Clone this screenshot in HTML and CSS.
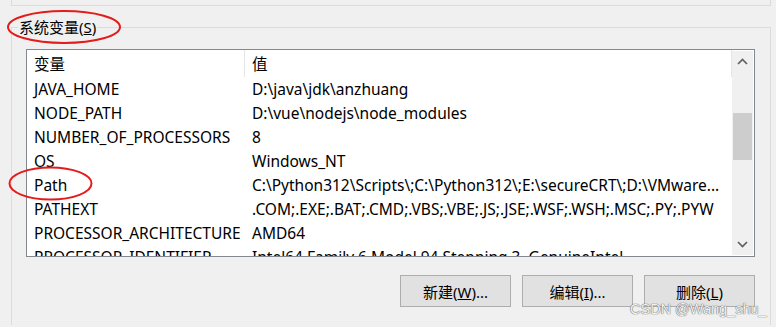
FILE: index.html
```html
<!DOCTYPE html>
<html>
<head>
<meta charset="utf-8">
<title>系统变量</title>
<link rel="stylesheet" href="styles.css">
</head>
<body>

<div class="prev-group"></div>

<fieldset class="group">
  <legend>系统变量(<u>S</u>)</legend>

  <div class="listview">
    <div class="list-body">
      <div class="row head">
        <div class="cell">变量</div>
        <div class="cell">值</div>
      </div>
      <div class="row"><div class="cell">JAVA_HOME</div><div class="cell">D:\java\jdk\anzhuang</div></div>
      <div class="row"><div class="cell">NODE_PATH</div><div class="cell">D:\vue\nodejs\node_modules</div></div>
      <div class="row"><div class="cell">NUMBER_OF_PROCESSORS</div><div class="cell">8</div></div>
      <div class="row"><div class="cell">OS</div><div class="cell">Windows_NT</div></div>
      <div class="row"><div class="cell">Path</div><div class="cell">C:\Python312\Scripts\;C:\Python312\;E:\secureCRT\;D:\VMware...</div></div>
      <div class="row"><div class="cell">PATHEXT</div><div class="cell">.COM;.EXE;.BAT;.CMD;.VBS;.VBE;.JS;.JSE;.WSF;.WSH;.MSC;.PY;.PYW</div></div>
      <div class="row"><div class="cell">PROCESSOR_ARCHITECTURE</div><div class="cell">AMD64</div></div>
      <div class="row"><div class="cell">PROCESSOR_IDENTIFIER</div><div class="cell">Intel64 Family 6 Model 94 Stepping 3, GenuineIntel</div></div>
    </div>

    <div class="scrollbar">
      <div class="sb-btn">
        <svg width="11" height="7" viewBox="0 0 11 7"><polyline points="1,6 5.5,1.5 10,6" /></svg>
      </div>
      <div class="sb-track"><div class="sb-thumb"></div></div>
      <div class="sb-btn">
        <svg width="11" height="7" viewBox="0 0 11 7"><polyline points="1,1 5.5,5.5 10,1" /></svg>
      </div>
    </div>
  </div>

  <div class="buttons">
    <button class="btn">新建(<u>W</u>)...</button>
    <button class="btn">编辑(<u>I</u>)...</button>
    <button class="btn">删除(<u>L</u>)</button>
  </div>
</fieldset>

<!-- red marks drawn over the screenshot -->
<svg class="marks" width="776" height="327">
  <ellipse cx="64" cy="27" rx="56" ry="16" />
  <ellipse cx="50.5" cy="183.5" rx="41" ry="16" />
</svg>

<div class="watermark">CSDN @Wang_shu_</div>

</body>
</html>
```

FILE: styles.css
```css
html, body {
    height: 327px;
    overflow: hidden;
}

body {
    margin: 0;
    position: relative;
    background: #f0f0f0;
    color: #000;
    font-family: "Noto Sans", "Noto Sans CJK SC", sans-serif;
    font-size: 15.5px;
}

.prev-group {
    margin: 0 5px 0 11px;
    height: 5px;
    border: 1px solid #dcdcdc;
    border-top: none;
}

.group {
    margin: 10px 5px 0 11px;
    padding: 0 15px 18px 14px;
    border: 1px solid #dcdcdc;
    border-bottom: none;
}

.group legend {
    margin-left: -8px;
    padding: 0 1px;
    font-size: 15px;
    line-height: 22px;
}

.listview {
    margin-top: 11px;
    height: 206px;
    display: flex;
    border: 1px solid #828790;
    background: #fff;
}

.list-body {
    width: 705px;
    overflow: hidden;
}

.row {
    display: grid;
    grid-template-columns: 218px 487px;
    height: 24px;
    line-height: 24px;
}

.row.head {
    height: 27px;
    line-height: 29px;
}

.row.head .cell {
    border-right: 1px solid #e5e5e5;
}

.cell {
    padding-left: 7px;
    white-space: nowrap;
    overflow: hidden;
}

.scrollbar {
    width: 21px;
    margin: 1px 1px 1px 0;
    display: flex;
    flex-direction: column;
    background: #f0f0f0;
}

.sb-btn {
    height: 21px;
    display: flex;
    align-items: center;
    justify-content: center;
}

.sb-btn svg polyline {
    fill: none;
    stroke: #606060;
    stroke-width: 1.7;
}

.sb-track {
    flex: 1;
}

.sb-thumb {
    margin: 41px 1px 0 1px;
    height: 47px;
    background: #cdcdcd;
}

.buttons {
    margin-top: 18px;
    display: flex;
    justify-content: flex-end;
    gap: 11px;
}

.btn {
    width: 111px;
    height: 32px;
    margin: 0;
    padding: 0;
    border: 1px solid #adadad;
    border-radius: 0;
    background: #e1e1e1;
    color: #000;
    font-family: "Noto Sans", "Noto Sans CJK SC", sans-serif;
    font-size: 15px;
}

.marks {
    position: absolute;
    left: 0;
    top: 0;
    pointer-events: none;
}

.marks ellipse {
    fill: none;
    stroke: #e41b1b;
    stroke-width: 2;
}

.watermark {
    position: absolute;
    left: 630px;
    top: 301px;
    font-family: "Liberation Sans", sans-serif;
    font-size: 14.5px;
    color: #f2f2f2;
    text-shadow: 0 0 1px #5c5c5c, 0 0 1px #5c5c5c;
    white-space: nowrap;
}
```
